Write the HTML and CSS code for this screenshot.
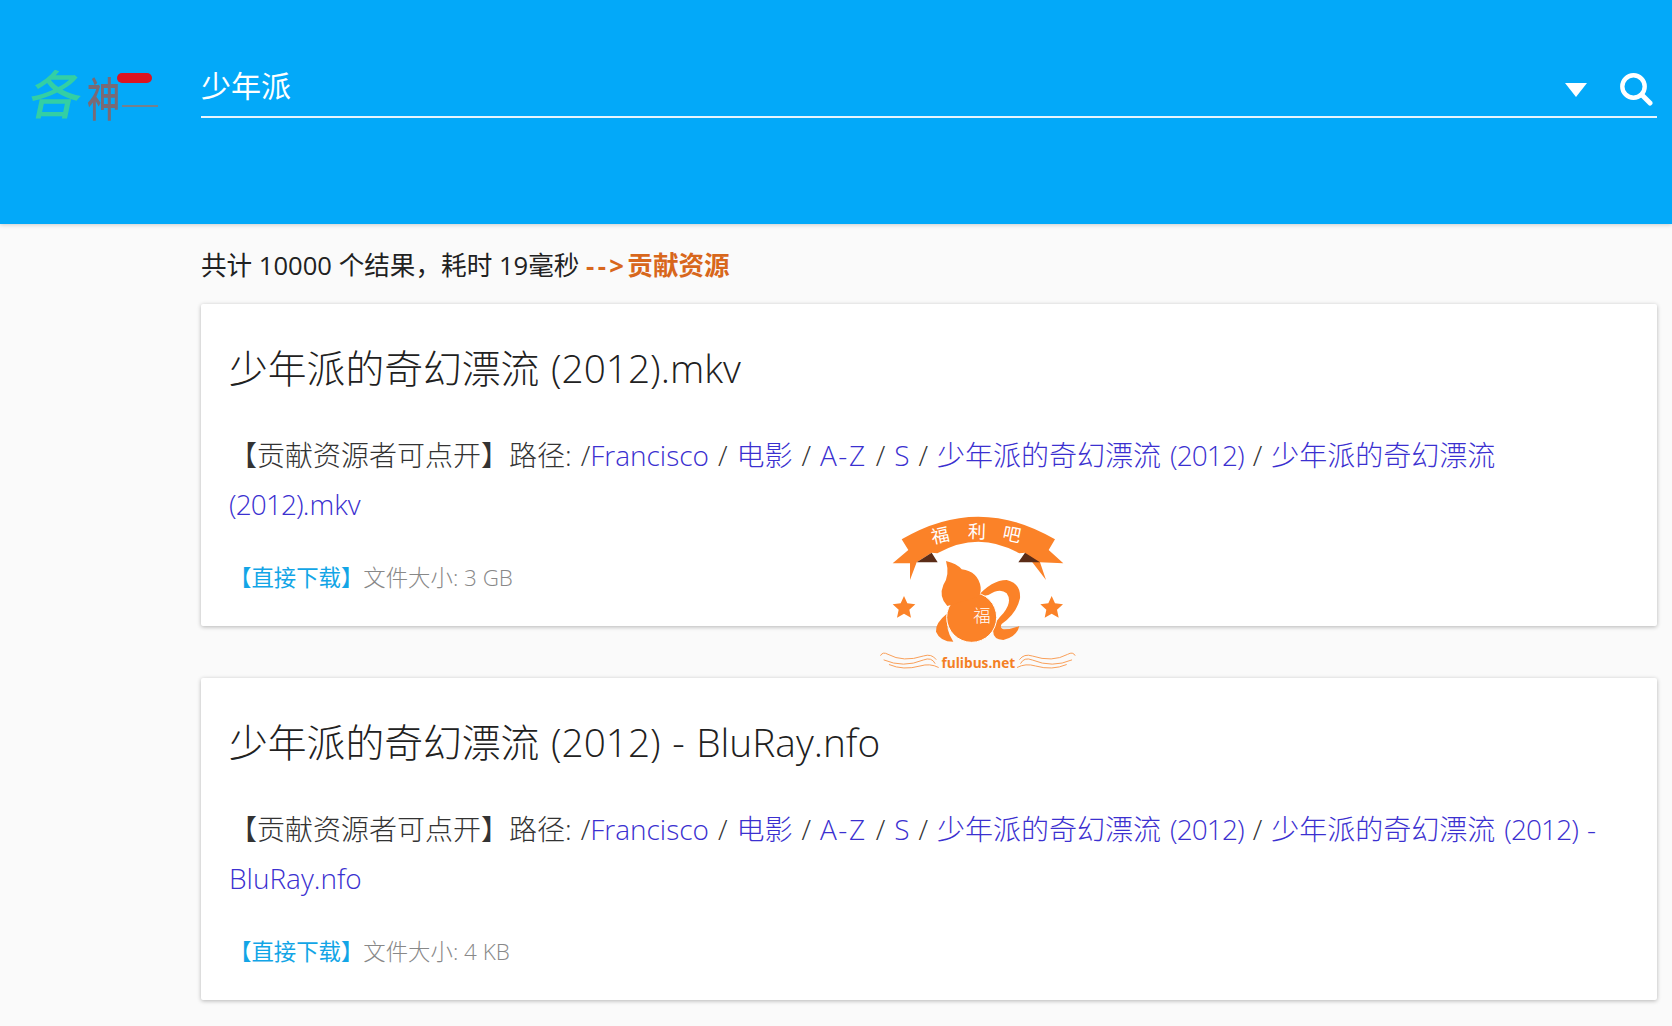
FILE: index.html
```html
<!DOCTYPE html>
<html lang="zh-CN">
<head>
<meta charset="utf-8">
<title>少年派</title>
<link rel="stylesheet" href="styles.css">
</head>
<body>
<header class="topbar">
  <div class="logo">
    <span class="logo-a">各</span><span class="logo-b">神</span>
    <span class="logo-seal"></span>
    <span class="logo-line"></span>
  </div>
  <div class="search">
    <span class="search-text">少年派</span>
    <span class="caret"></span>
    <svg class="search-icon" viewBox="0 0 34 34" aria-hidden="true"><circle cx="14.5" cy="14.5" r="11.2" fill="none" stroke="#fff" stroke-width="4.4"/><path d="M23 23 31 31" stroke="#fff" stroke-width="5" stroke-linecap="round"/></svg>
  </div>
</header>
<main class="results">
  <p class="summary">共计 10000 个结果<span class="comma">，</span>耗时 19毫秒 <a class="contrib" href="#"><span class="arrow">--&gt;</span>贡献资源</a></p>
  <article class="card">
    <h2 class="title">少年派的奇幻漂流 (2012).mkv</h2>
    <p class="path">【贡献资源者可点开】路径: /<a href="#">Francisco</a> / <a href="#">电影</a> / <a class="az" href="#">A-Z</a> / <a href="#">S</a> / <a href="#">少年派的奇幻漂流 <span class="yr">(2012)</span></a> / <a href="#">少年派的奇幻漂流 <span class="yr">(2012)</span>.mkv</a></p>
    <p class="meta"><a href="#">【直接下载】</a>文件大小: 3 GB</p>
  </article>
  <article class="card">
    <h2 class="title">少年派的奇幻漂流 (2012) - BluRay.nfo</h2>
    <p class="path">【贡献资源者可点开】路径: /<a href="#">Francisco</a> / <a href="#">电影</a> / <a class="az" href="#">A-Z</a> / <a href="#">S</a> / <a href="#">少年派的奇幻漂流 <span class="yr">(2012)</span></a> / <a href="#">少年派的奇幻漂流 <span class="yr">(2012)</span> - BluRay.nfo</a></p>
    <p class="meta"><a href="#">【直接下载】</a>文件大小: 4 KB</p>
  </article>
</main>
<svg class="watermark" viewBox="0 0 720 555" aria-hidden="true">
  <defs>
    <g id="flourish" fill="none" stroke="#f9a05a" stroke-width="3" stroke-linecap="round">
      <path d="M62 466Q68 454 84 463 130 488 190 468 215 460 228 478"/>
      <path d="M72 480Q130 505 190 480 215 470 225 490"/>
      <path d="M88 494Q130 512 180 498 210 489 235 502"/>
    </g>
  </defs>
  <g fill="#fb8228">
    <path d="M125 118Q355-18 585 118L566 150 610 190 540 187 558 240 495 158 478 160Q355 90 232 160L215 158 170 187 150 240 150 190 98 190 145 150Z"/>
    <path d="M132 288l10 22 24 3-18 16 5 24-21-12-21 12 5-24-18-16 24-3Z"/>
    <path d="M575 288l10 22 24 3-18 16 5 24-21-12-21 12 5-24-18-16 24-3Z"/>
    <path d="M262 340Q225 370 228 395 240 425 280 425 255 390 262 340Z"/>
    <path d="M350 292Q395 240 440 240 483 250 480 295 470 340 425 372 418 385 432 388 455 388 478 378 470 412 430 420 395 418 400 385 405 365 430 340 458 305 440 280 420 262 385 285Z"/>
    <circle cx="335" cy="352" r="75" stroke="#fff" stroke-width="3"/>
    <path d="M258 183Q290 190 305 208 355 215 362 262 364 285 350 292L262 318Q235 290 250 255 270 225 258 183Z"/>
  </g>
  <path d="M170 187 215 158 233 187Z M540 187 495 158 475 187Z" fill="#5b2c17"/>
  <use href="#flourish"/>
  <use href="#flourish" transform="translate(707 0) scale(-1 1)"/>
  <g class="wm-ribbon" fill="#fff">
    <text x="245" y="126" transform="rotate(-12 245 126)">福</text>
    <text x="350" y="114" transform="rotate(2 350 114)">利</text>
    <text x="452" y="122" transform="rotate(12 452 122)">吧</text>
  </g>
  <text class="wm-fu" x="366" y="365" fill="#fff">福</text>
  <text class="wm-site" x="355" y="503" fill="#f47f24">fulibus.net</text>
</svg>
</body>
</html>
```
FILE: styles.css
```css
* { box-sizing: border-box; }
html, body { margin: 0; padding: 0; }
body {
  position: relative;
  height: 1026px;
  overflow: hidden;
  background: #fafafa;
  color: #212121;
  font-family: "Open Sans", "Noto Sans CJK SC", sans-serif;
}
a { text-decoration: none; }
p, h2 { margin: 0; }

.topbar {
  display: flex;
  height: 224px;
  padding: 51px 15px 0 30px;
  background: #03a9f9;
  box-shadow: 0 1px 4px rgba(0, 0, 0, .18);
  align-items: flex-start;
}
.logo {
  position: relative;
  flex: 0 0 171px;
  height: 70px;
  filter: blur(.7px);
  font-family: "Noto Sans CJK SC", sans-serif;
}
.logo-a, .logo-b {
  position: absolute;
  line-height: 56px;
  font-weight: 500;
}
.logo-a { left: 1px; top: 13px; font-size: 52px; color: #33cfa4; transform: skewX(-12deg); }
.logo-b { left: 57px; top: 17px; font-size: 46px; color: #7a6a75; transform: scaleX(.72); transform-origin: left center; }
.logo-seal {
  position: absolute;
  left: 87px;
  top: 22px;
  width: 35px;
  height: 10px;
  border-radius: 5px;
  background: #dc1420;
}
.logo-line {
  position: absolute;
  left: 92px;
  top: 54px;
  width: 36px;
  height: 2px;
  background: #75808c;
}
.search {
  flex: 1;
  display: flex;
  align-items: center;
  height: 67px;
  border-bottom: 2px solid #e8f5fd;
}
.search-text {
  flex: 1;
  color: #fff;
  font-size: 30px;
  line-height: 40px;
  padding-top: 4px;
  font-weight: 400;
}
.caret {
  width: 0;
  height: 0;
  margin: 12px 32px 0 0;
  border: 11px solid transparent;
  border-top: 14px solid #fff;
  border-bottom: 0;
}
.search-icon {
  width: 34px;
  height: 34px;
  margin: 10px 4px 0 0;
}

.results { padding: 0 15px 0 201px; }
.summary {
  height: 80px;
  padding-top: 22px;
  font-size: 25.6px;
  line-height: 36px;
  color: #212121;
}
.comma { font-family: "Noto Sans CJK TC", sans-serif; }
.contrib { color: #d8671c; font-weight: 700; }
.arrow { letter-spacing: 3.4px; }
.card {
  height: 322px;
  margin-bottom: 52px;
  padding: 39px 28px 0;
  background: #fff;
  border-radius: 2px;
  box-shadow: 0 1px 4px rgba(0, 0, 0, .28);
}
.title {
  font-size: 38.8px;
  line-height: 50px;
  font-weight: 300;
  color: #212121;
  word-spacing: 1.5px;
}
.path {
  margin-top: 38px;
  font-size: 28px;
  line-height: 49px;
  font-weight: 300;
  color: #333;
  word-spacing: 1.7px;
}
.path a { color: #3b30d0; }
.path .az { letter-spacing: 1.6px; }
.path .yr { letter-spacing: -.9px; }
.meta {
  margin-top: 29px;
  font-size: 22.4px;
  line-height: 40px;
  font-weight: 300;
  color: #888;
}
.meta a { color: #12a5e6; font-weight: 400; }

.watermark {
  position: absolute;
  left: 860px;
  top: 500px;
  width: 240px;
  height: 185px;
}
.wm-ribbon { font: 400 54px "Noto Sans CJK SC", sans-serif; text-anchor: middle; }
.wm-fu { font: 300 52px "Noto Sans CJK SC", sans-serif; text-anchor: middle; }
.wm-site { font: 700 41px "Open Sans", sans-serif; text-anchor: middle; }
```
